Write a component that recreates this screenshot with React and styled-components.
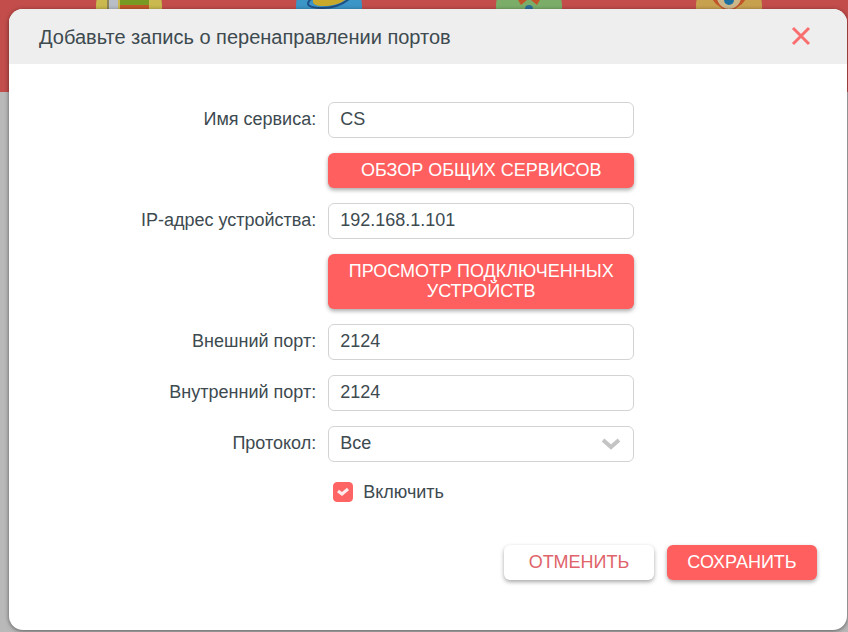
import { useState } from "react";
import styled, { createGlobalStyle } from "styled-components";

const GlobalStyle = createGlobalStyle`
  * {
    box-sizing: border-box;
  }

  body {
    margin: 0;
    background: #b9b9b9;
    color: #3d4a50;
    font-family: "Liberation Sans", Arial, sans-serif;
    font-size: 18px;
    line-height: 20px;
  }

  button, input, select {
    font: inherit;
    color: inherit;
  }
`;

const Page = styled.div`
  min-height: 100vh;
  overflow: hidden;
`;

const Banner = styled.nav`
  display: grid;
  grid-template-columns: repeat(4, 200px);
  justify-content: center;
  justify-items: center;
  height: 92px;
  padding-left: 10px;
  background: #c24d4b;
`;

const Overlay = styled.div`
  position: absolute;
  inset: 0;
  display: flex;
  padding: 9px 1px 2px 9px;
`;

const Dialog = styled.form`
  flex: 1;
  display: flex;
  flex-direction: column;
  background: #fff;
  border-radius: 14px;
  box-shadow: 0 1px 4px rgba(0, 0, 0, 0.5);
  overflow: hidden;
`;

const Header = styled.header`
  display: flex;
  align-items: center;
  justify-content: space-between;
  height: 55px;
  padding: 0 35px 0 30px;
  background: #eee;
`;

const Title = styled.h1`
  margin: 0;
  font-size: 20px;
  font-weight: 400;
  line-height: 24px;
`;

const CloseButton = styled.button`
  display: flex;
  padding: 0;
  border: 0;
  background: none;
  cursor: pointer;
`;

const Fields = styled.div`
  display: grid;
  grid-template-columns: 3fr 306px 2fr;
  row-gap: 15px;
  padding-top: 38px;
`;

const Label = styled.label`
  grid-column: 1;
  padding: 7px 12px 9px 0;
  text-align: right;
`;

const Input = styled.input`
  grid-column: 2;
  width: 100%;
  height: 36px;
  padding: 0 11px 2px;
  background: #fff;
  border: 1px solid #d3d3d3;
  border-radius: 6px;
`;

const SelectWrap = styled.div`
  grid-column: 2;
  display: grid;
  align-items: center;

  > * {
    grid-area: 1 / 1;
  }

  svg {
    justify-self: end;
    margin-right: 14px;
    pointer-events: none;
  }
`;

const Select = styled(Input).attrs({ as: "select" })`
  appearance: none;
`;

const Button = styled.button`
  padding: 7px 12px 8px;
  border: 0;
  border-radius: 6px;
  background: ${({ $plain }) => ($plain ? "#fff" : "#ff5f5f")};
  color: ${({ $plain }) => ($plain ? "#e0646a" : "#fff")};
  box-shadow: 0 2px 4px rgba(0, 0, 0, 0.35);
  text-transform: uppercase;
  cursor: pointer;
`;

const WideButton = styled(Button)`
  grid-column: 2;
`;

const CheckLabel = styled.label`
  grid-column: 2;
  display: flex;
  align-items: center;
  gap: 10px;
  padding: 5px;
`;

const CheckBox = styled.span`
  display: grid;
  width: 20px;
  height: 20px;

  > * {
    grid-area: 1 / 1;
  }

  svg {
    place-self: center;
    pointer-events: none;
  }
`;

const Check = styled.input`
  appearance: none;
  width: 20px;
  height: 20px;
  margin: 0;
  border: 1px solid #ff6464;
  border-radius: 4px;
  background: #fff;

  &:checked {
    background: #ff6464;
  }
`;

const Footer = styled.footer`
  display: flex;
  justify-content: flex-end;
  gap: 13px;
  margin-top: auto;
  padding: 38px 30px 50px;

  button {
    width: 150px;
  }
`;

const BannerIcons = () => (
  <Banner>
    <svg width="66" height="40" viewBox="0 0 66 40">
      <rect y="-26" width="66" height="66" rx="32" fill="#c9b94e" />
      <path d="M11 0H13V9H11Z" fill="#8d8558" />
      <path d="M13 0H22V9H13Z" fill="#b9bec6" />
      <path d="M24 0H53V5H24Z" fill="#789a22" />
      <path d="M24 5H53V9H24Z" fill="#c0582a" />
    </svg>
    <svg width="66" height="40" viewBox="0 0 66 40">
      <rect y="-26" width="66" height="66" rx="32" fill="#3b95c6" />
      <path d="M17 0H49C44 4 35 6 27 6C20 6 16 4 17 0Z" fill="#c9a92c" />
      <path
        d="M15 -1C8 5 14 8 26 8C37 8 47 4 53 -1"
        fill="none"
        stroke="#1f4f86"
        strokeWidth="2"
      />
    </svg>
    <svg width="66" height="40" viewBox="0 0 66 40">
      <rect y="-26" width="66" height="66" rx="32" fill="#7bad69" />
      <path d="M22 0L28 -3L31 0L25 5Z" fill="#c2542a" />
      <path d="M44 0L38 -3L35 0L41 5Z" fill="#c2542a" />
      <circle cx="33" cy="9" r="4" fill="#2c6f9b" />
    </svg>
    <svg width="66" height="40" viewBox="0 0 66 40">
      <rect y="-26" width="66" height="66" rx="32" fill="#c8a14f" />
      <path d="M16 -1L20 4L27 9H39L46 4L50 -1Z" fill="#c2542a" />
      <path d="M21 -1C23 6 28 9 33 9C38 9 43 6 45 -1Z" fill="#ccb78a" />
      <circle cx="33" r="5" fill="#1c6f9f" />
    </svg>
  </Banner>
);

export default function App() {
  const [form, setForm] = useState({
    name: "CS",
    ip: "192.168.1.101",
    external: "2124",
    internal: "2124",
    protocol: "all",
    enabled: true,
  });

  const bind = (key) => ({
    id: key,
    value: form[key],
    onChange: (e) => setForm({ ...form, [key]: e.target.value }),
  });

  return (
    <Page>
      <GlobalStyle />
      <BannerIcons />
      <Overlay>
        <Dialog role="dialog" aria-labelledby="title" onSubmit={(e) => e.preventDefault()}>
          <Header>
            <Title id="title">Добавьте запись о перенаправлении портов</Title>
            <CloseButton type="button" aria-label="Закрыть">
              <svg width="22" height="22" viewBox="0 0 22 22" fill="none" stroke="#f96f6f" strokeWidth="3">
                <path d="M3 2L19 18M19 2L3 18" />
              </svg>
            </CloseButton>
          </Header>
          <Fields>
            <Label htmlFor="name">Имя сервиса:</Label>
            <Input {...bind("name")} />
            <WideButton type="button">Обзор общих сервисов</WideButton>
            <Label htmlFor="ip">IP-адрес устройства:</Label>
            <Input {...bind("ip")} />
            <WideButton type="button">Просмотр подключенных устройств</WideButton>
            <Label htmlFor="external">Внешний порт:</Label>
            <Input {...bind("external")} />
            <Label htmlFor="internal">Внутренний порт:</Label>
            <Input {...bind("internal")} />
            <Label htmlFor="protocol">Протокол:</Label>
            <SelectWrap>
              <Select {...bind("protocol")}>
                <option value="all">Все</option>
                <option value="tcp">TCP</option>
                <option value="udp">UDP</option>
              </Select>
              <svg width="18" height="12" viewBox="0 0 18 12" fill="none" stroke="#c4c4c4" strokeWidth="4">
                <path d="M1 2L9 9L17 2" />
              </svg>
            </SelectWrap>
            <CheckLabel>
              <CheckBox>
                <Check
                  type="checkbox"
                  checked={form.enabled}
                  onChange={(e) => setForm({ ...form, enabled: e.target.checked })}
                />
                <svg width="12" height="10" viewBox="0 0 12 10" fill="none" stroke="#ffeded" strokeWidth="3">
                  <path d="M1 4L5 7L11 2" />
                </svg>
              </CheckBox>
              Включить
            </CheckLabel>
          </Fields>
          <Footer>
            <Button type="button" $plain>Отменить</Button>
            <Button type="submit">Сохранить</Button>
          </Footer>
        </Dialog>
      </Overlay>
    </Page>
  );
}
